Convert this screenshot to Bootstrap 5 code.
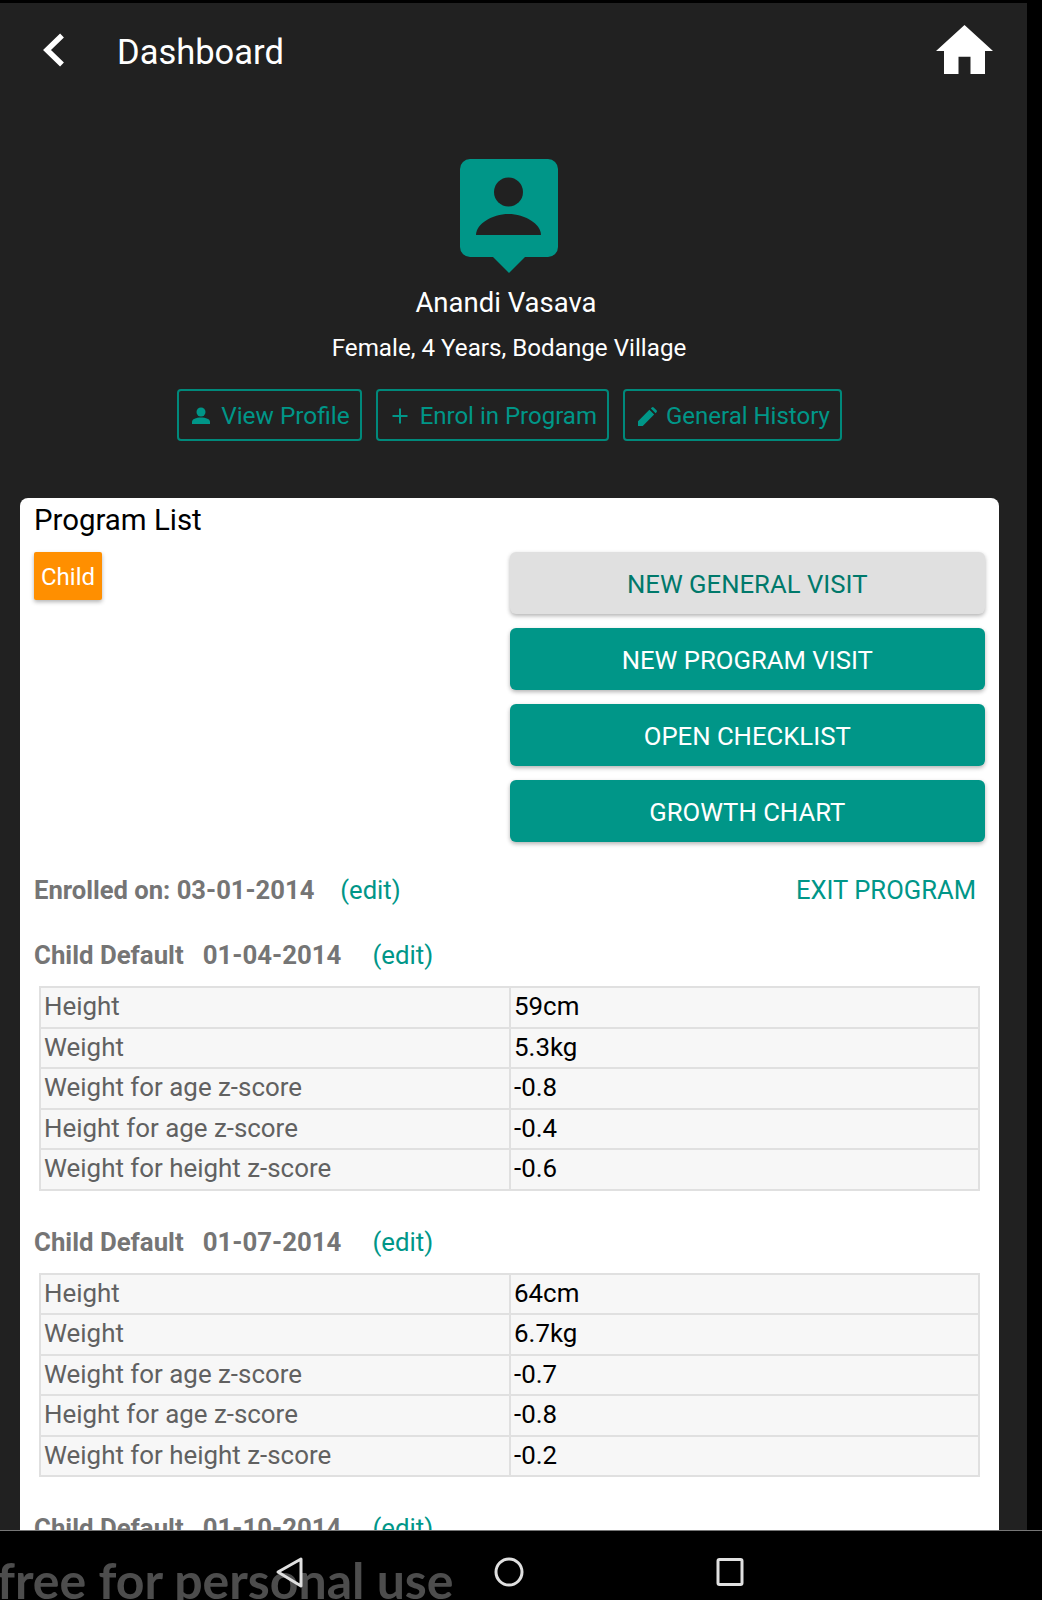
<!DOCTYPE html>
<html lang="en">
<head>
<meta charset="utf-8">
<title>Dashboard</title>
<link href="https://cdn.jsdelivr.net/npm/bootstrap@5.3.0/dist/css/bootstrap.min.css" rel="stylesheet">
<style>
html, body { height: 1600px; overflow: hidden; }
body { background: #000; font-family: Roboto, "Liberation Sans", sans-serif; color: #000; padding-top: 3px; }
.app-frame { width: 1027px; height: 1527px; background: #212121; overflow: hidden; }
.top-row { height: 98px; padding: 0 34px 0 43px; }
.top-row svg { margin-bottom: 5px; }
.top-title { color: #fff; font-size: 34.500px; margin-left: 52px; line-height: 1; }
.hero { padding: 58px 9px 0 0; height: 397px; }
.hero-name { color: #fff; font-size: 27.500px; line-height: 32px; margin-top: 13px; padding-right: 6px; }
.hero-sub { color: #fff; font-size: 24.200px; line-height: 30px; margin-top: 14px; }
.hero-actions { gap: 14px; margin-top: 26px; padding-left: 1px; }
.ghost-btn { height: 52px; color: #009688; border: 2px solid #00897b; border-radius: 4px; font-size: 24px; padding: 2px 10px 0 13px; background: transparent; gap: 11px; }
.ghost-btn:hover { color: #009688; border-color: #00897b; }
.ghost-roomy { font-size: 24.400px; }
.ghost-snug { gap: 9px; }
.sheet { width: 979px; height: 1100px; margin-left: 20px; background: #fff; border-radius: 8px 8px 0 0; padding: 0 14px; }
.sheet-title { font-size: 29.400px; line-height: 44px; }
.chip-row { margin-top: 10px; }
.chip { background: #ff8f00; color: #fff; font-size: 24px; line-height: 50px; height: 48px; padding: 0 7px; border-radius: 2px; box-shadow: 0 2px 4px rgba(0,0,0,.3); }
.visit-col { width: 475.500px; gap: 14px; }
.raised-btn { height: 62px; border: 0; border-radius: 6px; font-size: 25.700px; padding-top: 9px; background: #009688; color: #fff; box-shadow: 0 2px 4px rgba(0,0,0,.3); }
.raised-btn:hover { background: #009688; color: #fff; }
.raised-btn.is-light, .raised-btn.is-light:hover { background: #e0e0e0; color: #00796b; }
.enrol-row { margin-top: 31px; line-height: 34px; font-size: 25.600px; padding-right: 9px; }
.muted-strong { color: #757575; font-weight: 700; }
.teal-link { color: #009688; text-decoration: none; font-weight: 400; }
.enrol-edit { margin-left: 26px; }
.record-head { font-size: 25.800px; line-height: 34px; color: #757575; font-weight: 700; margin-top: 34px; }
.record-first { margin-top: 31px; }
.record-date { margin-left: 19px; }
.record-edit { margin-left: 31px; }
.record-table { width: 941px; margin: 14px 0 0 5px; border-collapse: collapse; table-layout: fixed; font-size: 25.900px; background: #f7f7f7; }
.record-table td { border: 2px solid #e0e0e0; height: 40.500px; padding: 0 3px; line-height: 1; }
.record-table td:first-child { width: 470px; color: #616161; }
.nav-strip { height: 70px; background: #000; overflow: hidden; border-top: 1px solid #777; }
.nav-icons { left: 0; top: 0; width: 1027px; height: 69px; }
.mark-text { left: -3px; top: 19px; font-family: Lato, "Open Sans", sans-serif; font-weight: 700; font-size: 50px; line-height: 60px; color: #4d4d4d; white-space: nowrap; }
.nav-glyph { position: absolute; top: 0; }
</style>
</head>
<body>
<div class="app-frame d-flex flex-column">
  <div class="top-row d-flex align-items-center flex-shrink-0">
    <svg width="22" height="34" viewBox="0 0 22 34"><path d="M19 2.500 4 17l15 14.500" fill="none" stroke="#fff" stroke-width="5.500"/></svg>
    <div class="top-title flex-grow-1">Dashboard</div>
    <svg width="57" height="49" viewBox="0 0 57 49"><path d="M28.500 0 57 26H49V49H34.500V31.700H22.500V49H8V26H0Z" fill="#fff"/></svg>
  </div>
  <div class="hero text-center flex-shrink-0">
    <svg width="98" height="115" viewBox="0 0 98 115" class="d-block mx-auto"><path d="M10 0h78a10 10 0 0 1 10 10v78a10 10 0 0 1-10 10H65l-16 16-16-16H10A10 10 0 0 1 0 88V10A10 10 0 0 1 10 0Z" fill="#009688"/><circle cx="48.500" cy="33" r="14.500" fill="#212121"/><path d="M16 76c0-11 16-21 32.500-21S81 65 81 76Z" fill="#212121"/></svg>
    <div class="hero-name">Anandi Vasava</div>
    <div class="hero-sub">Female, 4 Years, Bodange Village</div>
    <div class="hero-actions d-flex justify-content-center">
      <a href="#" class="btn ghost-btn ghost-roomy d-flex align-items-center"><svg width="18" height="18" viewBox="0 0 18 18"><circle cx="9" cy="5" r="4.500" fill="#009688"/><path d="M0 17v-2c0-3 4-4.500 9-4.500s9 1.500 9 4.500v2Z" fill="#009688"/></svg>View Profile</a>
      <a href="#" class="btn ghost-btn d-flex align-items-center"><svg width="18" height="16" viewBox="0 0 18 16"><path d="M9 .5v15M1.500 8h15" stroke="#009688" stroke-width="2"/></svg>Enrol in Program</a>
      <a href="#" class="btn ghost-btn ghost-snug d-flex align-items-center"><svg width="19" height="19" viewBox="0 0 20 20"><path d="M0 20v-5L12 3l5 5L5 20ZM13.500 1.500l1-1a1.500 1.500 0 0 1 2 0l3 3a1.500 1.500 0 0 1 0 2l-1 1Z" fill="#009688"/></svg>General History</a>
    </div>
  </div>
  <div class="sheet flex-shrink-0">
    <div class="sheet-title">Program List</div>
    <div class="chip-row d-flex justify-content-between align-items-start">
      <span class="chip">Child</span>
      <div class="visit-col d-flex flex-column">
        <button class="btn raised-btn is-light">NEW GENERAL VISIT</button>
        <button class="btn raised-btn">NEW PROGRAM VISIT</button>
        <button class="btn raised-btn">OPEN CHECKLIST</button>
        <button class="btn raised-btn">GROWTH CHART</button>
      </div>
    </div>
    <div class="enrol-row d-flex justify-content-between">
      <div><span class="muted-strong">Enrolled on: 03-01-2014</span><a href="#" class="teal-link enrol-edit">(edit)</a></div>
      <a href="#" class="teal-link">EXIT PROGRAM</a>
    </div>
    <div class="record-head record-first">Child Default<span class="record-date">01-04-2014</span><a href="#" class="teal-link record-edit">(edit)</a></div>
    <table class="record-table">
      <tr><td>Height</td><td>59cm</td></tr>
      <tr><td>Weight</td><td>5.3kg</td></tr>
      <tr><td>Weight for age z-score</td><td>-0.8</td></tr>
      <tr><td>Height for age z-score</td><td>-0.4</td></tr>
      <tr><td>Weight for height z-score</td><td>-0.6</td></tr>
    </table>
    <div class="record-head">Child Default<span class="record-date">01-07-2014</span><a href="#" class="teal-link record-edit">(edit)</a></div>
    <table class="record-table">
      <tr><td>Height</td><td>64cm</td></tr>
      <tr><td>Weight</td><td>6.7kg</td></tr>
      <tr><td>Weight for age z-score</td><td>-0.7</td></tr>
      <tr><td>Height for age z-score</td><td>-0.8</td></tr>
      <tr><td>Weight for height z-score</td><td>-0.2</td></tr>
    </table>
    <div class="record-head">Child Default<span class="record-date">01-10-2014</span><a href="#" class="teal-link record-edit">(edit)</a></div>
  </div>
</div>
<div class="nav-strip position-relative">
  <div class="mark-text position-absolute">free for personal use</div>
  <div class="nav-icons position-absolute">
    <svg class="nav-glyph" style="left:275px" width="30" height="69" viewBox="0 0 30 69"><path d="M26 28 3 41l23 14Z" fill="none" stroke="#e0e0e0" stroke-width="3" stroke-linejoin="round"/></svg>
    <svg class="nav-glyph" style="left:492px" width="34" height="69" viewBox="0 0 34 69"><circle cx="17" cy="41" r="13" fill="none" stroke="#e0e0e0" stroke-width="3"/></svg>
    <svg class="nav-glyph" style="left:714px" width="32" height="69" viewBox="0 0 32 69"><rect x="4" y="28.500" width="24" height="25" rx="1.500" fill="none" stroke="#e0e0e0" stroke-width="3"/></svg>
  </div>
</div>
<script src="https://cdn.jsdelivr.net/npm/bootstrap@5.3.0/dist/js/bootstrap.bundle.min.js"></script>
</body>
</html>
